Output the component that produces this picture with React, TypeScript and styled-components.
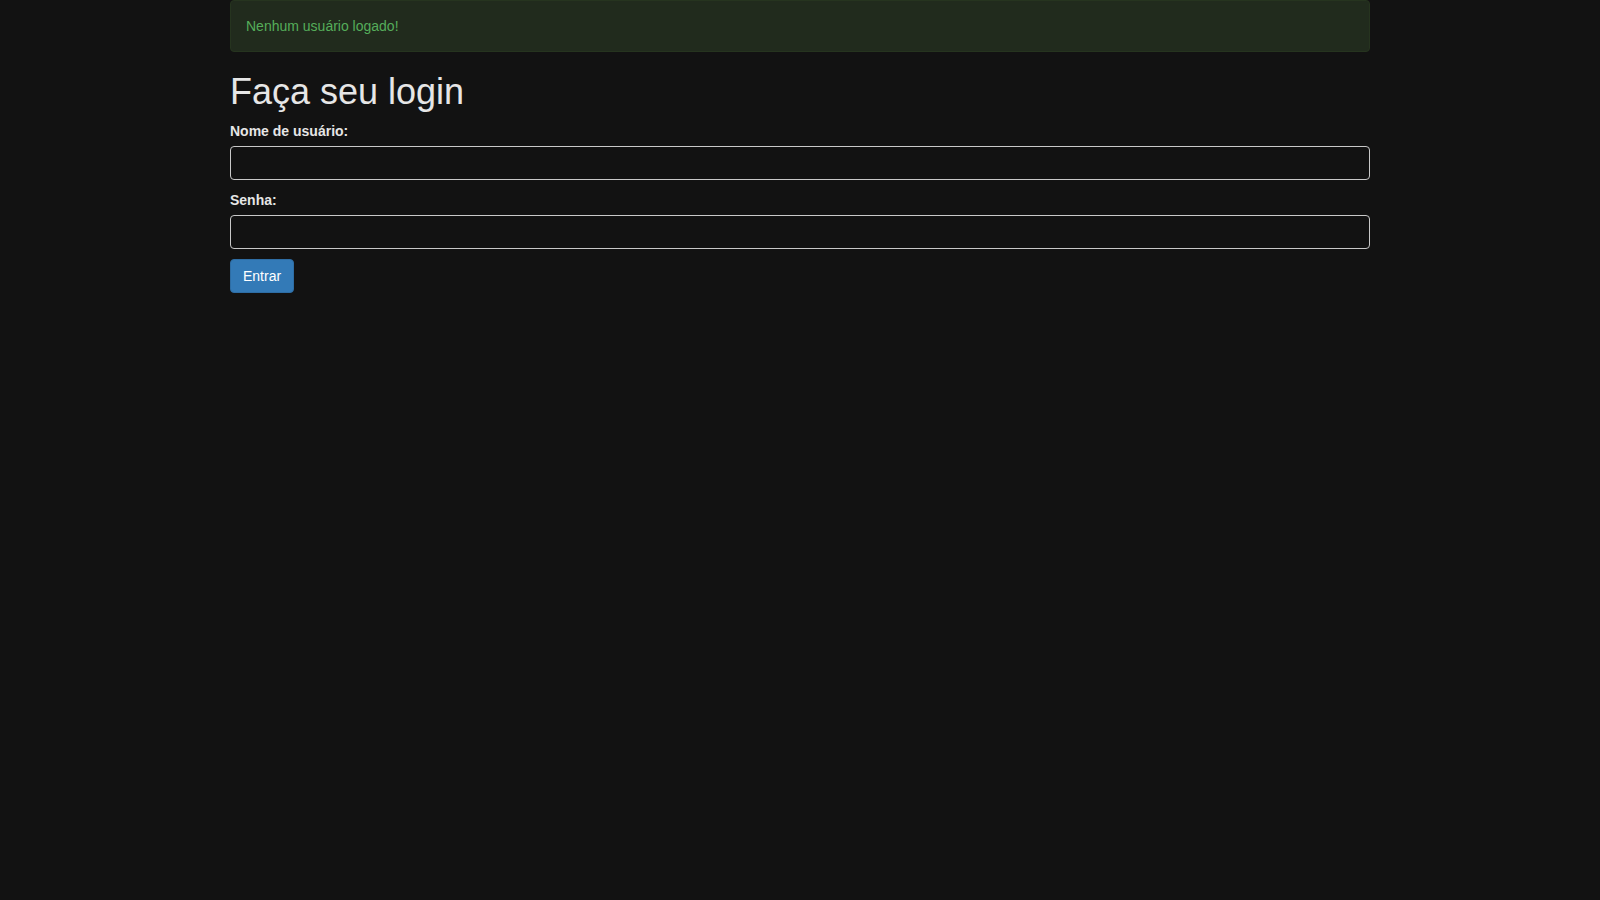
import React from "react";
import styled, { createGlobalStyle } from "styled-components";

const Global = createGlobalStyle`
  html, body { margin: 0; padding: 0; }
  body {
    background: #121212;
    color: #e0e0e0;
    font-family: "Liberation Sans", Arial, Helvetica, sans-serif;
    font-size: 14px;
    line-height: 1.42857;
    min-height: 900px;
  }
  * { box-sizing: border-box; }
`;

const Container = styled.div`
  width: 1170px;
  margin: 0 auto;
  padding: 0 15px;
`;

const Alert = styled.div`
  background: #212b1d;
  border: 1px solid #26341f;
  border-radius: 4px;
  color: #55ad5a;
  padding: 15px;
  line-height: 20px;
  margin-bottom: 20px;
`;

const Title = styled.h1`
  font-size: 36px;
  font-weight: 500;
  line-height: 1.1;
  margin: 0 0 9px;
  color: #e6e6e6;
`;

const Form = styled.form`
  display: flex;
  flex-direction: column;
`;

const Group = styled.div`
  margin-bottom: 10px;
`;

const Label = styled.label`
  display: block;
  font-weight: bold;
  line-height: 20px;
  margin-bottom: 5px;
  color: #e6e6e6;
`;

const Input = styled.input`
  display: block;
  width: 100%;
  height: 34px;
  padding: 6px 12px;
  background: #121212;
  color: #e6e6e6;
  border: 1px solid #c8c8c8;
  border-radius: 4px;
  font-family: inherit;
  font-size: 14px;
  outline: none;
`;

const Button = styled.button`
  align-self: flex-start;
  height: 34px;
  padding: 6px 12px;
  background: #337ab7;
  border: 1px solid #2e6da4;
  border-radius: 4px;
  color: #fff;
  font-family: inherit;
  font-size: 14px;
  line-height: 20px;
  cursor: pointer;
`;

export default function App() {
  return (
    <>
      <Global />
      <Container>
        <Alert>Nenhum usuário logado!</Alert>
        <Title>Faça seu login</Title>
        <Form onSubmit={(e) => e.preventDefault()}>
          <Group>
            <Label htmlFor="username">Nome de usuário:</Label>
            <Input id="username" type="text" />
          </Group>
          <Group>
            <Label htmlFor="password">Senha:</Label>
            <Input id="password" type="password" />
          </Group>
          <Button type="submit">Entrar</Button>
        </Form>
      </Container>
    </>
  );
}
